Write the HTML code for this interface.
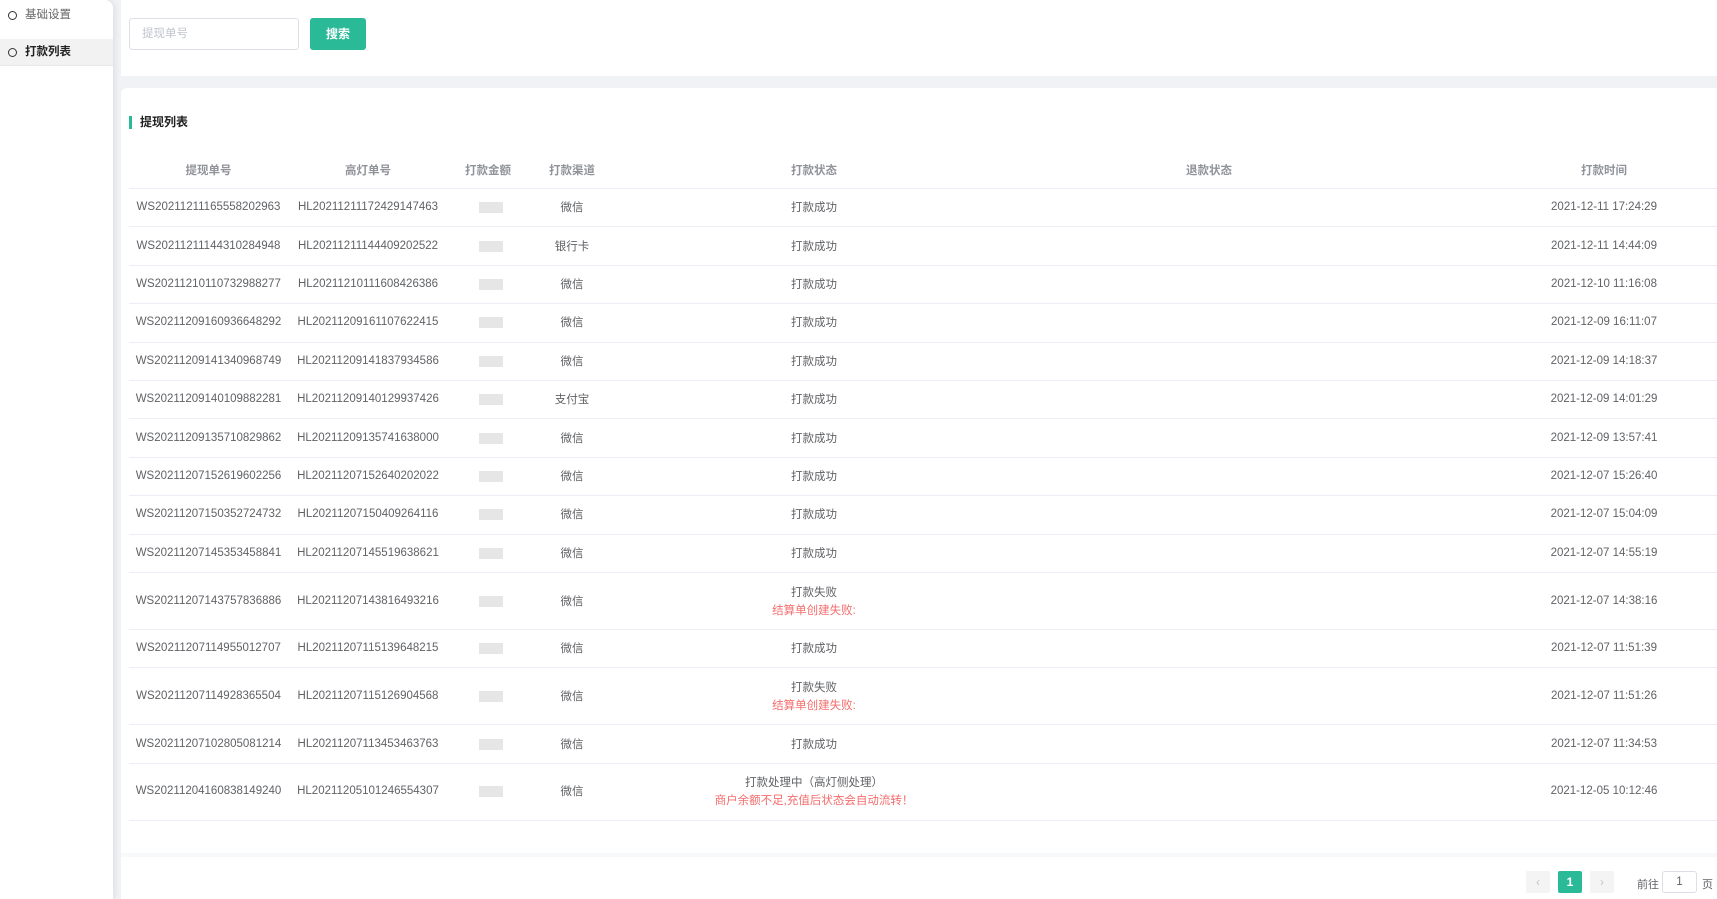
<!DOCTYPE html>
<html><head><meta charset="utf-8"><style>
*{margin:0;padding:0;box-sizing:border-box}
html,body{width:1717px;height:899px;overflow:hidden;background:#f0f2f5;font-family:"Liberation Sans","Noto Sans CJK SC",sans-serif;font-size:11.5px;color:#606266}
.side{position:absolute;left:0;top:0;width:113px;height:899px;background:#fff;box-shadow:2px 0 6px rgba(0,0,0,.08);border-radius:0 8px 0 0}
.mi{position:absolute;left:0;width:113px;height:27px;line-height:27px;padding-left:25px;font-size:11.5px}
.mi:before{content:"";position:absolute;left:8px;top:9px;width:7px;height:7px;border:1.6px solid #333;border-radius:50%}
.top{position:absolute;left:121px;top:0;width:1596px;height:76px;background:#fff}
.inp{position:absolute;left:129px;top:18px;width:170px;height:32px;border:1px solid #dcdfe6;border-radius:3px;color:#c0c4cc;font-size:11.5px;line-height:30px;padding-left:12px}
.btn{position:absolute;left:310px;top:18px;width:56px;height:32px;background:#2bba98;border-radius:3px;color:#fff;font-weight:bold;text-align:center;line-height:32px;font-size:12px}
.card{position:absolute;left:121px;top:88px;width:1596px;height:811px;background:#fff;border-radius:6px 0 0 0}
.title{position:absolute;left:129px;top:116px;height:13px;border-left:3px solid #2bba98;padding-left:8px;line-height:13px;font-weight:bold;color:#222;font-size:12px}
.c{position:absolute;text-align:center;white-space:nowrap}
.h{color:#909399;font-weight:bold}
.ln{position:absolute;left:129px;width:1588px;height:1px;background:#ebeef5}
.bl{position:absolute;background:#e6e6e6;height:11px}
.red{color:#f56c6c}
.pg{position:absolute;top:871px;width:24px;height:22px;border-radius:2px;background:#f4f4f5;color:#c0c4cc;text-align:center;line-height:22px;font-size:12px}
</style></head><body>
<div class="side">
<div class="mi" style="top:2px;color:#666">基础设置</div>
<div class="mi" style="top:39px;background:#f2f2f2;color:#222;font-weight:bold;border-bottom:1px solid #e8e8e8">打款列表</div>
</div>
<div class="top"></div>
<div class="inp">提现单号</div>
<div class="btn">搜索</div>
<div class="card"></div>
<div style="position:absolute;left:121px;top:853px;width:1596px;height:4px;background:#f8f9fb"></div>
<div class="title">提现列表</div>
<div class="c h" style="left:129px;width:159px;top:162px">提现单号</div>
<div class="c h" style="left:288px;width:160px;top:162px">高灯单号</div>
<div class="c h" style="left:448px;width:80px;top:162px">打款金额</div>
<div class="c h" style="left:528px;width:88px;top:162px">打款渠道</div>
<div class="c h" style="left:616px;width:396px;top:162px">打款状态</div>
<div class="c h" style="left:1012px;width:394px;top:162px">退款状态</div>
<div class="c h" style="left:1406px;width:396px;top:162px">打款时间</div>
<div class="ln" style="top:188px"></div>
<div id="rows"></div>
<div class="pg" style="left:1526px">&lsaquo;</div>
<div class="pg" style="left:1558px;background:#2bba98;color:#fff;font-weight:bold">1</div>
<div class="pg" style="left:1590px">&rsaquo;</div>
<div style="position:absolute;left:1637px;top:876px;font-size:11px">前往</div>
<div style="position:absolute;left:1662px;top:871px;width:35px;height:22px;border:1px solid #dcdfe6;border-radius:3px;text-align:center;line-height:20px">1</div>
<div style="position:absolute;left:1702px;top:876px;font-size:11px">页</div>
<script>
var d=[
["WS20211211165558202963","HL20211211172429147463","微信","2021-12-11 17:24:29"],
["WS20211211144310284948","HL20211211144409202522","银行卡","2021-12-11 14:44:09"],
["WS20211210110732988277","HL20211210111608426386","微信","2021-12-10 11:16:08"],
["WS20211209160936648292","HL20211209161107622415","微信","2021-12-09 16:11:07"],
["WS20211209141340968749","HL20211209141837934586","微信","2021-12-09 14:18:37"],
["WS20211209140109882281","HL20211209140129937426","支付宝","2021-12-09 14:01:29"],
["WS20211209135710829862","HL20211209135741638000","微信","2021-12-09 13:57:41"],
["WS20211207152619602256","HL20211207152640202022","微信","2021-12-07 15:26:40"],
["WS20211207150352724732","HL20211207150409264116","微信","2021-12-07 15:04:09"],
["WS20211207145353458841","HL20211207145519638621","微信","2021-12-07 14:55:19"],
["WS20211207143757836886","HL20211207143816493216","微信","2021-12-07 14:38:16","打款失败","结算单创建失败:"],
["WS20211207114955012707","HL20211207115139648215","微信","2021-12-07 11:51:39"],
["WS20211207114928365504","HL20211207115126904568","微信","2021-12-07 11:51:26","打款失败","结算单创建失败:"],
["WS20211207102805081214","HL20211207113453463763","微信","2021-12-07 11:34:53"],
["WS20211204160838149240","HL20211205101246554307","微信","2021-12-05 10:12:46","打款处理中（高灯侧处理）","商户余额不足,充值后状态会自动流转！"]];
var y=188,h='';
d.forEach(function(r){
 var H=r[4]?57:38.4, mc=y+H/2-8, m=mc+2;
 h+='<div class="c" style="left:129px;width:159px;top:'+m+'px">'+r[0]+'</div>';
 h+='<div class="c" style="left:288px;width:160px;top:'+m+'px">'+r[1]+'</div>';
 h+='<div class="bl" style="left:479px;width:24px;top:'+(m+1)+'px"></div>';
 h+='<div class="c" style="left:528px;width:88px;top:'+mc+'px">'+r[2]+'</div>';
 if(r[4]){h+='<div class="c" style="left:616px;width:396px;top:'+(mc-9)+'px">'+r[4]+'</div><div class="c red" style="left:616px;width:396px;top:'+(mc+9)+'px">'+r[5]+'</div>';}
 else h+='<div class="c" style="left:616px;width:396px;top:'+mc+'px">打款成功</div>';
 h+='<div class="c" style="left:1406px;width:396px;top:'+m+'px">'+r[3]+'</div>';
 y+=H; h+='<div class="ln" style="top:'+Math.round(y)+'px"></div>';
});
document.getElementById('rows').innerHTML=h;
</script>
</body></html>
